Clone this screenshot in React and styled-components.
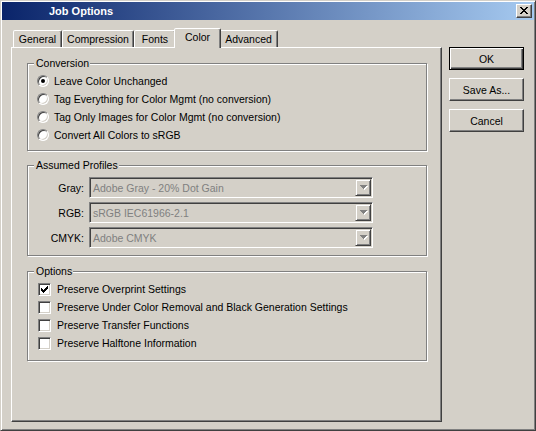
import React from "react";
import styled, { createGlobalStyle } from "styled-components";

const GlobalStyle = createGlobalStyle`
  html, body {
    margin: 0;
    padding: 0;
    background: #d4d0c8;
  }
  * {
    box-sizing: border-box;
  }
`;

const tabs = [
  { label: "General", w: 49 },
  { label: "Compression", w: 72 },
  { label: "Fonts", w: 42 },
  { label: "Color", w: 43, active: true },
  { label: "Advanced", w: 59 },
];

const conversions = [
  { label: "Leave Color Unchanged", checked: true },
  { label: "Tag Everything for Color Mgmt (no conversion)" },
  { label: "Tag Only Images for Color Mgmt (no conversion)" },
  { label: "Convert All Colors to sRGB" },
];

const profiles = [
  { label: "Gray:", value: "Adobe Gray - 20% Dot Gain" },
  { label: "RGB:", value: "sRGB IEC61966-2.1" },
  { label: "CMYK:", value: "Adobe CMYK" },
];

const options = [
  { label: "Preserve Overprint Settings", checked: true },
  { label: "Preserve Under Color Removal and Black Generation Settings" },
  { label: "Preserve Transfer Functions" },
  { label: "Preserve Halftone Information" },
];

// pixel masks for the little classic glyphs
const closePixels = [
  [0, 0], [1, 0], [6, 0], [7, 0],
  [1, 1], [2, 1], [5, 1], [6, 1],
  [2, 2], [3, 2], [4, 2], [5, 2],
  [3, 3], [4, 3],
  [2, 4], [3, 4], [4, 4], [5, 4],
  [1, 5], [2, 5], [5, 5], [6, 5],
  [0, 6], [1, 6], [6, 6], [7, 6],
];

const checkPixels = [
  [6, 0],
  [5, 1], [6, 1],
  [0, 2], [4, 2], [5, 2], [6, 2],
  [0, 3], [1, 3], [3, 3], [4, 3], [5, 3],
  [0, 4], [1, 4], [2, 4], [3, 4], [4, 4],
  [1, 5], [2, 5], [3, 5],
  [2, 6],
];

const PixelIcon = ({ pixels, w, h, color }) => (
  <svg width={w} height={h} viewBox={`0 0 ${w} ${h}`} shapeRendering="crispEdges">
    {pixels.map(([x, y]) => (
      <rect key={`${x}-${y}`} x={x} y={y} width="1" height="1" fill={color} />
    ))}
  </svg>
);

const ArrowIcon = () => (
  <svg width="8" height="5" viewBox="0 0 8 5" shapeRendering="crispEdges">
    <rect x="1" y="1" width="7" height="1" fill="#fff" />
    <rect x="2" y="2" width="5" height="1" fill="#fff" />
    <rect x="3" y="3" width="3" height="1" fill="#fff" />
    <rect x="4" y="4" width="1" height="1" fill="#fff" />
    <rect x="0" y="0" width="7" height="1" fill="#808080" />
    <rect x="1" y="1" width="5" height="1" fill="#808080" />
    <rect x="2" y="2" width="3" height="1" fill="#808080" />
    <rect x="3" y="3" width="1" height="1" fill="#808080" />
  </svg>
);

const App = () => {
  return (
    <>
      <GlobalStyle />
      <Window>
        <TitleBar>
          <Title>Job Options</Title>
          <CloseButton>
            <PixelIcon pixels={closePixels} w={8} h={7} color="#000" />
          </CloseButton>
        </TitleBar>

        <Body>
          <Sheet>
            <TabStrip>
              {tabs.map((tab) => (
                <Tab key={tab.label} $w={tab.w} $active={tab.active}>
                  {tab.label}
                </Tab>
              ))}
            </TabStrip>

            <Panel>
              <GroupBox $h={88} $mt={15} $pad="8px 0 0 9px">
                <Legend>Conversion</Legend>
                {conversions.map((item) => (
                  <Row key={item.label} $gap={5}>
                    <Radio $checked={item.checked} />
                    {item.label}
                  </Row>
                ))}
              </GroupBox>

              <GroupBox $h={91} $mt={14} $pad="11px 0 0 0">
                <Legend>Assumed Profiles</Legend>
                <ProfileList>
                  {profiles.map((p) => (
                    <ProfileRow key={p.label}>
                      <ProfileLabel>{p.label}</ProfileLabel>
                      <Combo>
                        <ComboText>{p.value}</ComboText>
                        <ComboButton>
                          <ArrowIcon />
                        </ComboButton>
                      </Combo>
                    </ProfileRow>
                  ))}
                </ProfileList>
              </GroupBox>

              <GroupBox $h={90} $mt={15} $pad="8px 0 0 10px">
                <Legend>Options</Legend>
                {options.map((item) => (
                  <Row key={item.label} $gap={6}>
                    <Checkbox>
                      {item.checked && (
                        <PixelIcon pixels={checkPixels} w={7} h={7} color="#000" />
                      )}
                    </Checkbox>
                    {item.label}
                  </Row>
                ))}
              </GroupBox>
            </Panel>
          </Sheet>

          <ButtonColumn>
            <Button $default>OK</Button>
            <Button>Save As...</Button>
            <Button>Cancel</Button>
          </ButtonColumn>
        </Body>
      </Window>
    </>
  );
};

const Window = styled.div`
  width: 536px;
  height: 431px;
  padding: 1px;
  background: #d4d0c8;
  border: 1px solid;
  border-color: #d4d0c8 #404040 #404040 #d4d0c8;
  box-shadow: inset 1px 1px 0 0 #fff, inset -1px -1px 0 0 #808080;
  font-family: "Liberation Sans", Arial, sans-serif;
  font-size: 10.5px;
  color: #000;
  display: flex;
  flex-direction: column;
`;

const TitleBar = styled.div`
  height: 18px;
  display: flex;
  align-items: center;
  justify-content: space-between;
  padding: 0 2px 0 47px;
  background: linear-gradient(to right, #0a246a, #a6caf0);
`;

const Title = styled.span`
  color: #fff;
  font-size: 11px;
  font-weight: bold;
  line-height: 18px;
`;

const CloseButton = styled.div`
  width: 16px;
  height: 14px;
  display: flex;
  align-items: center;
  justify-content: center;
  padding: 0 1px 1px 0;
  background: #d4d0c8;
  border: 1px solid;
  border-color: #fff #404040 #404040 #fff;
  box-shadow: inset -1px -1px 0 0 #808080;
`;

const Body = styled.div`
  display: flex;
  align-items: flex-start;
  gap: 7px;
  padding: 8px 0 0 9px;
`;

const Sheet = styled.div`
  display: flex;
  flex-direction: column;
`;

const TabStrip = styled.div`
  display: flex;
  align-items: flex-end;
  height: 19px;
  padding-left: 2px;
`;

const Tab = styled.div`
  position: relative;
  width: ${(p) => (p.$active ? p.$w + 4 : p.$w)}px;
  height: ${(p) => (p.$active ? 20 : 17)}px;
  margin: 0 ${(p) => (p.$active ? -2 : 0)}px ${(p) => (p.$active ? -1 : 0)}px;
  z-index: ${(p) => (p.$active ? 2 : 1)};
  display: flex;
  align-items: center;
  justify-content: center;
  padding-bottom: ${(p) => (p.$active ? 3 : 0)}px;
  background: #d4d0c8;
  border: 1px solid;
  border-bottom: none;
  border-color: #fff #404040 transparent #fff;
  border-radius: 2px 2px 0 0;
  box-shadow: inset -1px 0 0 0 #808080;
  white-space: nowrap;
`;

const Panel = styled.div`
  width: 431px;
  height: 375px;
  padding: 0 0 0 15px;
  background: #d4d0c8;
  border: 1px solid;
  border-color: #fff #404040 #404040 #fff;
  box-shadow: inset -1px -1px 0 0 #808080;
  display: flex;
  flex-direction: column;
`;

const GroupBox = styled.div`
  position: relative;
  width: 400px;
  height: ${(p) => p.$h}px;
  margin-top: ${(p) => p.$mt}px;
  padding: ${(p) => p.$pad};
  border: 1px solid #808080;
  box-shadow: 1px 1px 0 0 #fff, inset 1px 1px 0 0 #fff;
  flex-shrink: 0;
`;

const Legend = styled.span`
  position: absolute;
  top: -7px;
  left: 6px;
  padding: 0 1px 0 2px;
  line-height: 13px;
  background: #d4d0c8;
`;

const Row = styled.div`
  display: flex;
  align-items: center;
  height: 18px;
  gap: ${(p) => p.$gap}px;
  white-space: nowrap;
`;

const Radio = styled.span`
  position: relative;
  width: 12px;
  height: 12px;
  flex-shrink: 0;
  border-radius: 50%;
  background: #fff;
  border: 1px solid;
  border-color: #808080 #fff #fff #808080;
  box-shadow: inset 1px 1px 0 0 #404040, inset -1px -1px 0 0 #d4d0c8;

  &::after {
    content: "";
    display: ${(p) => (p.$checked ? "block" : "none")};
    position: absolute;
    left: 3px;
    top: 3px;
    width: 4px;
    height: 4px;
    border-radius: 50%;
    background: #000;
  }
`;

const Checkbox = styled.span`
  width: 13px;
  height: 13px;
  flex-shrink: 0;
  display: flex;
  align-items: center;
  justify-content: center;
  background: #fff;
  border: 1px solid;
  border-color: #808080 #fff #fff #808080;
  box-shadow: inset 1px 1px 0 0 #404040, inset -1px -1px 0 0 #d4d0c8;
`;

const ProfileList = styled.div`
  display: flex;
  flex-direction: column;
  gap: 4px;
`;

const ProfileRow = styled.div`
  display: flex;
  align-items: center;
  gap: 5px;
`;

const ProfileLabel = styled.span`
  width: 56px;
  text-align: right;
`;

const Combo = styled.div`
  width: 284px;
  height: 21px;
  padding: 1px;
  display: flex;
  align-items: stretch;
  background: #d4d0c8;
  border: 1px solid;
  border-color: #808080 #fff #fff #808080;
  box-shadow: inset 1px 1px 0 0 #404040, inset -1px -1px 0 0 #d4d0c8;
`;

const ComboText = styled.span`
  flex: 1;
  display: flex;
  align-items: center;
  padding-left: 2px;
  color: #808080;
  white-space: nowrap;
`;

const ComboButton = styled.span`
  width: 16px;
  display: flex;
  align-items: center;
  justify-content: center;
  padding-left: 1px;
  background: #d4d0c8;
  border: 1px solid;
  border-color: #d4d0c8 #404040 #404040 #d4d0c8;
  box-shadow: inset 1px 1px 0 0 #fff, inset -1px -1px 0 0 #808080;
`;

const ButtonColumn = styled.div`
  display: flex;
  flex-direction: column;
  gap: 8px;
  margin-top: 19px;
`;

const Button = styled.div`
  width: 75px;
  height: 23px;
  display: flex;
  align-items: center;
  justify-content: center;
  background: #d4d0c8;
  border: 1px solid;
  border-color: ${(p) => (p.$default ? "#000" : "#fff #404040 #404040 #fff")};
  box-shadow: ${(p) =>
    p.$default
      ? "inset 1px 1px 0 0 #fff, inset -1px -1px 0 0 #404040, inset -2px -2px 0 0 #808080"
      : "inset -1px -1px 0 0 #808080"};
`;

export default App;
